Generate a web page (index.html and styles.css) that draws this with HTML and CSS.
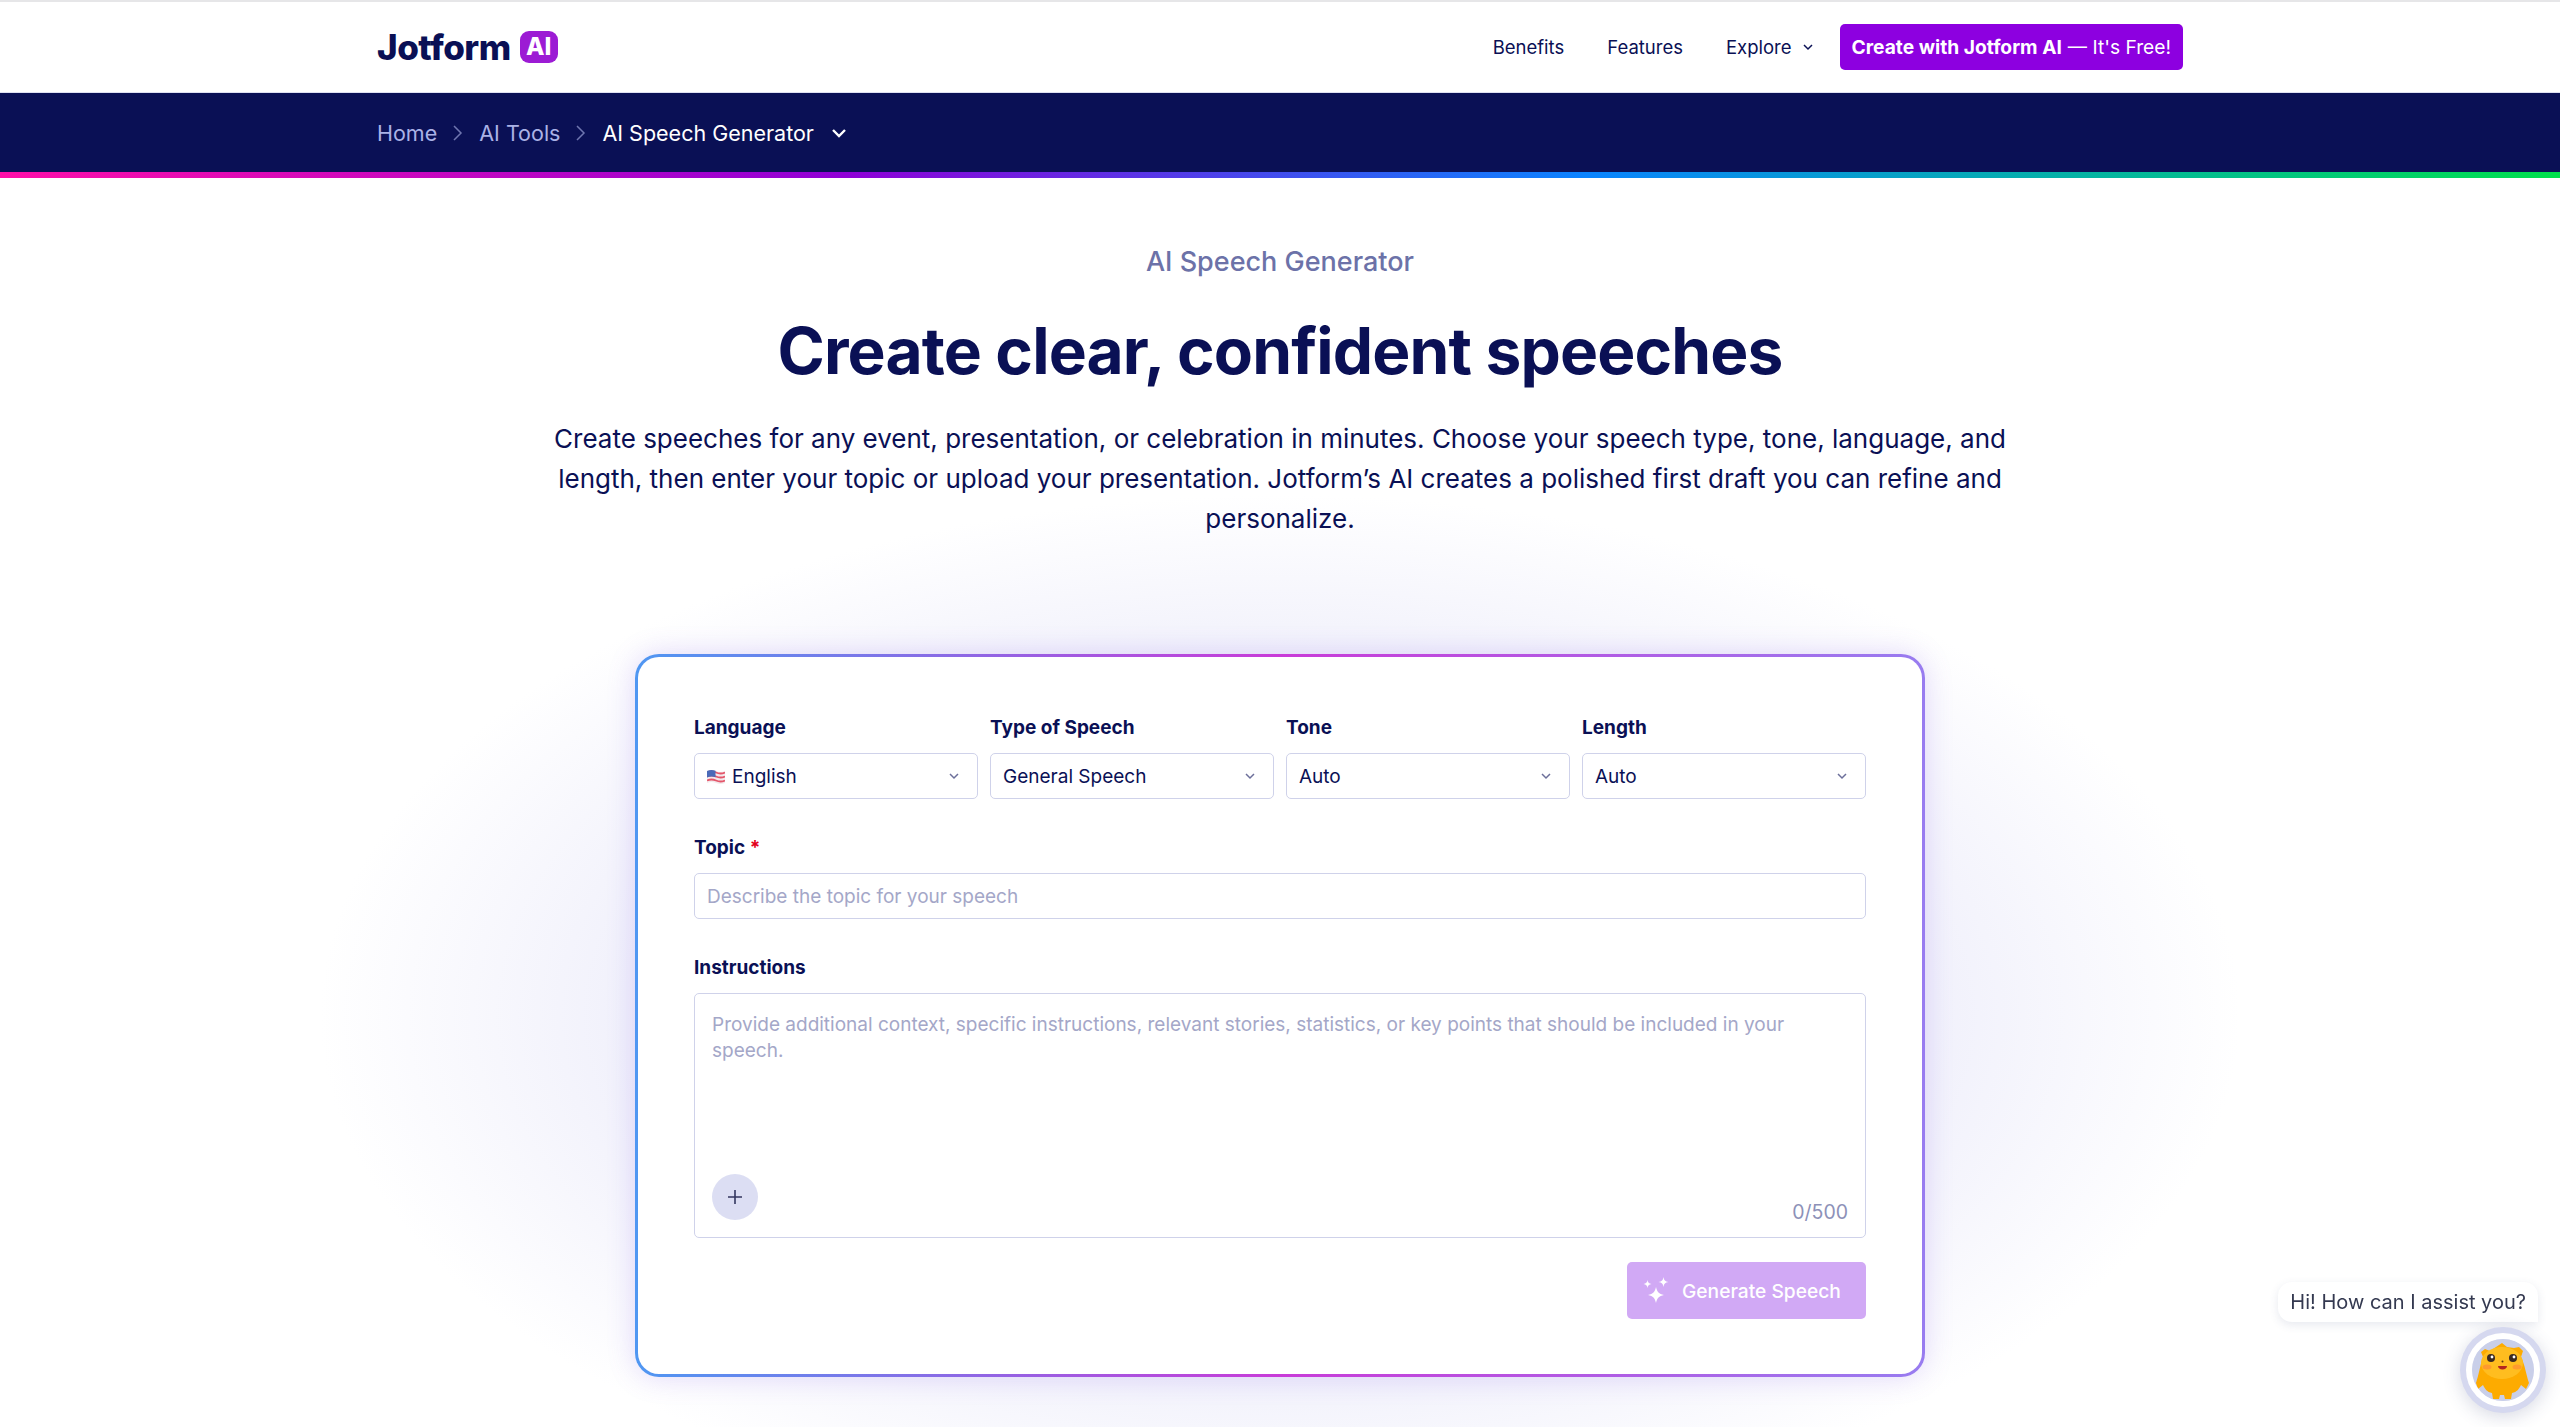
FILE: index.html
```html
<!DOCTYPE html>
<html lang="en">
<head>
    <meta charset="UTF-8">
    <meta name="viewport" content="width=device-width, initial-scale=1.0">
    <title>AI Speech Generator</title>
    <link rel="stylesheet" href="styles.css">
</head>
<body>
    <header class="topbar">
        <div class="wrap topbar-inner">
            <a class="logo" href="#">Jotform <span class="logo-badge">AI</span></a>
            <nav class="nav">
                <a href="#">Benefits</a>
                <a href="#">Features</a>
                <a href="#" class="nav-explore">Explore
                    <svg width="12" height="12" viewBox="0 0 12 12"><path d="M2 4l4 4 4-4" fill="none" stroke="#0a1055" stroke-width="1.500"/></svg>
                </a>
                <a href="#" class="nav-cta"><b>Create with Jotform AI</b> — It's Free!</a>
            </nav>
        </div>
    </header>

    <div class="crumbs">
        <div class="wrap crumbs-inner">
            <a href="#">Home</a>
            <svg class="crumb-sep" width="12" height="20" viewBox="0 0 12 20"><path d="M2 3l7 7-7 7" fill="none" stroke="#6f76b0" stroke-width="1.500"/></svg>
            <a href="#">AI Tools</a>
            <svg class="crumb-sep" width="12" height="20" viewBox="0 0 12 20"><path d="M2 3l7 7-7 7" fill="none" stroke="#6f76b0" stroke-width="1.500"/></svg>
            <span class="crumb-current">AI Speech Generator</span>
            <svg class="crumb-caret" width="16" height="16" viewBox="0 0 16 16"><path d="M2 5l6 6 6-6" fill="none" stroke="#fff" stroke-width="2.400"/></svg>
        </div>
    </div>
    <div class="rainbow"></div>

    <main class="hero">
        <div class="eyebrow">AI Speech Generator</div>
        <h1>Create clear, confident speeches</h1>
        <p class="lead">Create speeches for any event, presentation, or celebration in minutes. Choose your speech type, tone, language, and length, then enter your topic or upload your presentation. Jotform’s AI creates a polished first draft you can refine and personalize.</p>

        <form class="card">
            <div class="select-row">
                <div class="field">
                    <label>Language</label>
                    <div class="select">
                        <svg class="flag" width="18" height="15" viewBox="0 0 18 15">
                            <path d="M0 2q4.500-2 9 0t9 0v12q-4.500 2-9 0t-9 0z" fill="#f3e9ec"/>
                            <path d="M0 3.500q4.500-2 9 0t9 0M0 7.500q4.500-2 9 0t9 0M0 11.500q4.500-2 9 0t9 0" fill="none" stroke="#e4566a" stroke-width="1.800"/>
                            <path d="M0 2q4-1.800 8.500-.3v6.500q-4.500-1.500-8.500.3z" fill="#4a6ab8"/>
                        </svg>
                        <span>English</span>
                        <svg class="chev" width="14" height="14" viewBox="0 0 14 14"><path d="M3 5l4 4 4-4" fill="none" stroke="#6c6f9a" stroke-width="1.500"/></svg>
                    </div>
                </div>
                <div class="field">
                    <label>Type of Speech</label>
                    <div class="select">
                        <span>General Speech</span>
                        <svg class="chev" width="14" height="14" viewBox="0 0 14 14"><path d="M3 5l4 4 4-4" fill="none" stroke="#6c6f9a" stroke-width="1.500"/></svg>
                    </div>
                </div>
                <div class="field">
                    <label>Tone</label>
                    <div class="select">
                        <span>Auto</span>
                        <svg class="chev" width="14" height="14" viewBox="0 0 14 14"><path d="M3 5l4 4 4-4" fill="none" stroke="#6c6f9a" stroke-width="1.500"/></svg>
                    </div>
                </div>
                <div class="field">
                    <label>Length</label>
                    <div class="select">
                        <span>Auto</span>
                        <svg class="chev" width="14" height="14" viewBox="0 0 14 14"><path d="M3 5l4 4 4-4" fill="none" stroke="#6c6f9a" stroke-width="1.500"/></svg>
                    </div>
                </div>
            </div>

            <div class="field field-topic">
                <label>Topic <span class="req">*</span></label>
                <input class="text-input" type="text" placeholder="Describe the topic for your speech">
            </div>

            <div class="field field-instr">
                <label>Instructions</label>
                <div class="instr-box">
                    <textarea placeholder="Provide additional context, specific instructions, relevant stories, statistics, or key points that should be included in your speech."></textarea>
                    <div class="instr-foot">
                        <span class="plus">
                            <svg width="16" height="16" viewBox="0 0 16 16"><path d="M8 1v14M1 8h14" stroke="#33365f" stroke-width="1.600"/></svg>
                        </span>
                        <span class="count">0/500</span>
                    </div>
                </div>
            </div>

            <div class="actions">
                <button type="button" class="generate">
                    <svg width="26" height="28" viewBox="0 0 26 28" fill="#fff">
                        <path d="M13 10c1.200 5.200 2.800 6.800 8 8-5.200 1.200-6.800 2.800-8 8-1.200-5.200-2.800-6.800-8-8 5.200-1.200 6.800-2.800 8-8z"/>
                        <path d="M20.500 0c.7 3.500 1.500 4.300 5 5-3.500.7-4.300 1.500-5 5-.7-3.500-1.500-4.300-5-5 3.500-.7 4.300-1.500 5-5z"/>
                        <path d="M4.500 3c.5 2.700 1.300 3.500 4 4-2.700.5-3.500 1.300-4 4-.5-2.700-1.300-3.500-4-4 2.700-.5 3.500-1.300 4-4z"/>
                    </svg>
                    Generate Speech
                </button>
            </div>
        </form>
    </main>

    <div class="chat-bubble">Hi! How can I assist you?</div>
    <div class="chat-avatar">
        <svg width="62" height="62" viewBox="0 0 62 62">
            <circle cx="31" cy="31" r="31" fill="#c9cfe9"/>
            <path d="M9 13l4-3 5 2 6-4 6-4 5 4 7 1 5-1 4 4-2 6c4 8 5 17 8 26l-3 6-5-4c-2 4-4 7-9 8l-1 6h-6l-1-4h-4l-1 4h-6l-1-6c-5-1-7-4-9-8l-5 4-2-6c3-9 4-18 7-26z" fill="#fdab00"/>
            <ellipse cx="30" cy="24" rx="21" ry="16" fill="#ffbd1f"/>
            <ellipse cx="15" cy="28" rx="4.500" ry="2.500" fill="#ff9a2e"/>
            <ellipse cx="45" cy="28" rx="4.500" ry="2.500" fill="#ff9a2e"/>
            <circle cx="19" cy="19" r="4" fill="#3b2a20"/>
            <circle cx="41" cy="19" r="4" fill="#3b2a20"/>
            <circle cx="20" cy="18" r="1.400" fill="#fff"/>
            <circle cx="42" cy="18" r="1.400" fill="#fff"/>
            <path d="M26 27h9c0 2-2 3.500-4.500 3.500S26 29 26 27z" fill="#b3261e"/>
            <circle cx="30.500" cy="22.500" r="1" fill="#5a3a10"/>
        </svg>
    </div>
</body>
</html>
```

FILE: styles.css
```css
* {
    box-sizing: border-box;
}
html, body {
    margin: 0;
    height: 1427px;
    overflow: hidden;
}
body {
    font-family: Inter, "Noto Sans", sans-serif;
    color: #0a1055;
    background: #fff;
}
a {
    color: inherit;
    text-decoration: none;
}
.wrap {
    width: 1806px;
    margin: 0 auto;
}

/* top bar */
.topbar {
    height: 93px;
    border-top: 2px solid #e6e6e8;
    border-bottom: 1px solid #dfe1f2;
}
.topbar-inner {
    height: 100%;
    display: flex;
    align-items: center;
    justify-content: space-between;
}
.logo {
    display: flex;
    align-items: center;
    gap: 9px;
    font-size: 35px;
    font-weight: 800;
    letter-spacing: -0.5px;
}
.logo-badge {
    width: 38px;
    height: 32px;
    border-radius: 9px;
    background: #9c1bd4;
    color: #fff;
    font-size: 24px;
    font-weight: 800;
    letter-spacing: 0;
    text-align: center;
    line-height: 32px;
}
.nav {
    display: flex;
    align-items: center;
    gap: 43px;
    font-size: 18.500px;
}
.nav-explore {
    display: flex;
    align-items: center;
    gap: 10px;
    margin-right: -17px;
}
.nav-cta {
    height: 46px;
    padding: 0 12px;
    display: flex;
    align-items: center;
    gap: 6px;
    background: #8d00e0;
    border-radius: 5px;
    color: #fff;
    font-size: 19.200px;
}
.nav-cta b {
    font-weight: 700;
}

/* breadcrumb */
.crumbs {
    height: 79px;
    background: #0a1055;
}
.crumbs-inner {
    height: 100%;
    display: flex;
    align-items: center;
    gap: 15px;
    font-size: 21.500px;
    color: #aab2e6;
}
.crumb-current {
    color: #fff;
}
.crumb-caret {
    margin-left: 2px;
}
.rainbow {
    height: 6px;
    background: linear-gradient(90deg, #ff0fa8 0%, #8f00d6 33%, #0a84ff 62%, #00e04b 100%);
}

/* hero */
.hero {
    position: relative;
    display: flex;
    flex-direction: column;
    align-items: center;
    padding-top: 69px;
    height: 1249px;
    overflow: hidden;
    background: radial-gradient(ellipse 960px 520px at 50% 837px, #e8e7fa 0%, #f0f0fb 66%, #fff 100%);
}
.eyebrow {
    font-size: 27px;
    line-height: 30px;
    font-weight: 500;
    color: #6c72a8;
}
h1 {
    margin: 33px 0 0;
    font-size: 64px;
    line-height: 82px;
    font-weight: 700;
    letter-spacing: -0.850px;
}
.lead {
    width: 1470px;
    margin: 27px 0 0;
    font-size: 26px;
    line-height: 40px;
    text-align: center;
}

/* form card */
.card {
    width: 1290px;
    height: 723px;
    margin-top: 115px;
    padding: 58px 56px 0;
    border: 3px solid transparent;
    border-radius: 24px;
    background:
        linear-gradient(#fff, #fff) padding-box,
        linear-gradient(90deg, #4f97f2 0%, #c93bd8 50%, #987cf0 100%) border-box;
    box-shadow: 0 0 28px rgba(130, 90, 230, 0.22);
}
.select-row {
    display: grid;
    grid-template-columns: repeat(4, 1fr);
    gap: 12px;
}
.field label {
    display: block;
    font-size: 19px;
    line-height: 26px;
    font-weight: 700;
    margin-bottom: 12px;
}
.req {
    color: #e3001b;
}
.select, .text-input, .instr-box {
    border: 1.500px solid #cfd2ea;
    border-radius: 5px;
    background: #fff;
}
.select {
    height: 46px;
    padding: 0 12px;
    display: flex;
    align-items: center;
    gap: 7px;
    font-size: 19px;
}
.chev {
    margin-left: auto;
    margin-right: 4px;
}
.field-topic {
    margin-top: 36px;
}
.text-input {
    display: block;
    width: 100%;
    height: 46px;
    padding: 0 12px;
    font: 19px Inter, "Noto Sans", sans-serif;
    color: #0a1055;
}
.text-input::placeholder, textarea::placeholder {
    color: #a4a7c8;
    opacity: 1;
}
.field-instr {
    margin-top: 36px;
}
.instr-box {
    height: 245px;
    padding: 18px 17px 16px;
    display: flex;
    flex-direction: column;
}
textarea {
    flex: 1;
    border: 0;
    padding: 0;
    resize: none;
    outline: none;
    font: 19px/26px Inter, "Noto Sans", sans-serif;
}
.instr-foot {
    display: flex;
    align-items: flex-end;
    justify-content: space-between;
}
.plus {
    width: 46px;
    height: 46px;
    border-radius: 50%;
    background: #dcdef3;
    display: flex;
    align-items: center;
    justify-content: center;
    margin-bottom: 1px;
}
.count {
    font-size: 19.500px;
    color: #8d91b8;
    margin-bottom: -3px;
}
.actions {
    display: flex;
    justify-content: flex-end;
    margin-top: 24px;
}
.generate {
    width: 239px;
    height: 57px;
    border: 0;
    border-radius: 5px;
    background: #d1a9f5;
    color: #fff;
    display: flex;
    align-items: center;
    gap: 13px;
    padding: 0 0 0 16px;
    font: 500 19.200px Inter, "Noto Sans", sans-serif;
}

/* chat widget */
.chat-bubble {
    position: fixed;
    right: 22px;
    top: 1282px;
    height: 40px;
    padding: 0 12px;
    display: flex;
    align-items: center;
    font-size: 20px;
    color: #343950;
    background: #fff;
    border-radius: 14px 14px 0 14px;
    box-shadow: 0 3px 10px rgba(60, 70, 120, 0.12);
}
.chat-avatar {
    position: fixed;
    left: 2460px;
    top: 1327px;
    width: 86px;
    height: 86px;
    padding: 5px;
    border-radius: 50%;
    background: #d5d8ef;
    display: flex;
    align-items: center;
    justify-content: center;
    box-shadow: 0 4px 18px rgba(60, 70, 120, 0.2);
}
.chat-avatar svg {
    border: 6px solid #fff;
    border-radius: 50%;
    width: 74px;
    height: 74px;
}
```
